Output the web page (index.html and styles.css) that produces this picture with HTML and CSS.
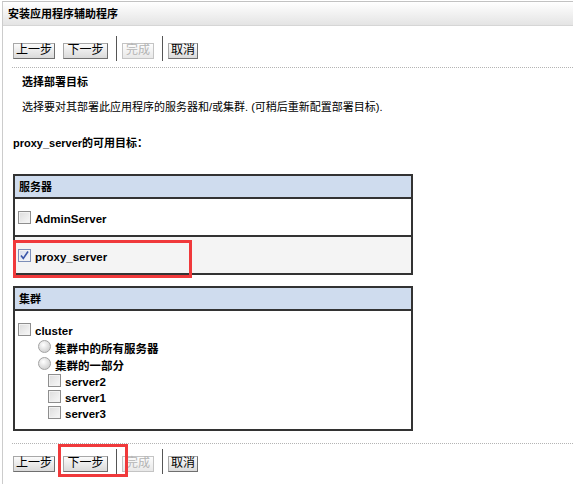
FILE: index.html
```html
<!DOCTYPE html>
<html lang="zh">

<head>
    <meta charset="UTF-8">
    <title>安装应用程序辅助程序</title>
    <link rel="stylesheet" href="styles.css">
</head>

<body>
    <div class="wizard">
        <div class="titlebar">安装应用程序辅助程序</div>

        <div class="toolbar top">
            <button class="btn">上一步</button>
            <button class="btn">下一步</button>
            <span class="sep"></span>
            <button class="btn" disabled>完成</button>
            <span class="sep"></span>
            <button class="btn">取消</button>
        </div>

        <h2 class="step-title">选择部署目标</h2>
        <p class="step-desc">选择要对其部署此应用程序的服务器和/或集群. (可稍后重新配置部署目标).</p>

        <h3 class="targets-title">proxy_server的可用目标：</h3>

        <div class="target-box">
            <div class="box-head">服务器</div>
            <div class="box-row">
                <span class="check"></span>
                <span class="label">AdminServer</span>
            </div>
            <div class="box-row alt">
                <span class="check checked">
                    <svg width="11" height="11" viewBox="0 0 11 11">
                        <path d="M2 5.5 L4.3 8.5 L9 1.5" fill="none" stroke="#3a55a8" stroke-width="1.6" />
                    </svg>
                </span>
                <span class="label">proxy_server</span>
            </div>
            <div class="mark mark-row"></div>
        </div>

        <div class="target-box">
            <div class="box-head">集群</div>
            <div class="box-body">
                <div class="tree-row">
                    <span class="check"></span>
                    <span class="label">cluster</span>
                </div>
                <div class="tree-row level1">
                    <span class="radio"></span>
                    <span class="label">集群中的所有服务器</span>
                </div>
                <div class="tree-row level1">
                    <span class="radio"></span>
                    <span class="label">集群的一部分</span>
                </div>
                <div class="tree-row level2 short">
                    <span class="check"></span>
                    <span class="label">server2</span>
                </div>
                <div class="tree-row level2 short">
                    <span class="check"></span>
                    <span class="label">server1</span>
                </div>
                <div class="tree-row level2 short">
                    <span class="check"></span>
                    <span class="label">server3</span>
                </div>
            </div>
        </div>

        <div class="toolbar bottom">
            <button class="btn">上一步</button>
            <button class="btn">下一步</button>
            <span class="sep"></span>
            <button class="btn" disabled>完成</button>
            <span class="sep"></span>
            <button class="btn">取消</button>
            <div class="mark mark-btn"></div>
        </div>
    </div>
</body>

</html>
```

FILE: styles.css
```css
body {
    margin: 0;
    font-family: "Liberation Sans", "Noto Sans CJK SC", sans-serif;
    font-size: 11px;
    color: #000;
    background-color: #fff;
}

.wizard {
    margin: 1px 0 0 2px;
    border-top: 1px solid #c2c2c2;
    border-left: 1px solid #cccccc;
    min-height: 482px;
}

.titlebar {
    height: 22px;
    line-height: 22px;
    padding: 1px 0 0 5px;
    font-weight: bold;
    background: linear-gradient(#ffffff, #e4e4e4);
    border-bottom: 1px solid #d6d6d6;
}

.toolbar {
    display: flex;
    align-items: center;
    margin-left: 9px;
    padding-left: 1px;
}

.toolbar.top {
    padding-top: 10px;
    padding-bottom: 6px;
    border-bottom: 1px dotted #b4b4b4;
}

.toolbar.bottom {
    position: relative;
    margin-top: 12px;
    padding-top: 5px;
    border-top: 1px dotted #b4b4b4;
}

.btn {
    height: 16px;
    padding: 0 2px;
    margin: 4px 8px 0 0;
    font-family: inherit;
    font-size: 12px;
    line-height: 13px;
    color: #000;
    background: linear-gradient(#fbfbfb, #dadada);
    border: 1px solid #a8a8a8;
    border-right-color: #6f6f6f;
    border-bottom-color: #6f6f6f;
    border-radius: 0;
}

.btn[disabled] {
    padding: 0 3px;
    color: #b4b4b4;
    background: linear-gradient(#fdfdfd, #e8e8e8);
    border-color: #c4c4c4;
}

.btn + .btn {
    padding: 0 3.5px;
}

.sep {
    width: 1px;
    height: 25px;
    margin: 0 5px 0 0;
    background-color: #555;
}

.step-title {
    margin: 5px 0 0 19px;
    padding-top: 1px;
    font-size: 11px;
    line-height: 16px;
}

.step-desc {
    margin: 8px 0 0 19px;
    padding-top: 1px;
    line-height: 16px;
}

.targets-title {
    margin: 19px 0 0 10px;
    padding-top: 1px;
    font-size: 11px;
    line-height: 16px;
}

.target-box {
    position: relative;
    width: 400px;
    box-sizing: border-box;
    margin: 23px 0 0 10px;
    border: 2px solid #333;
}

.target-box + .target-box {
    margin-top: 11px;
}

.box-head {
    height: 19px;
    line-height: 19px;
    padding: 2px 0 0 4px;
    font-weight: bold;
    background-color: #cfdcee;
    border-bottom: 2px solid #333;
}

.box-row {
    display: flex;
    align-items: center;
    height: 36px;
    padding-left: 3px;
}

.box-row.alt {
    border-top: 2px solid #333;
    background-color: #f4f4f4;
}

.label {
    margin-left: 4px;
    padding-top: 3px;
    font-size: 11.5px;
    font-weight: bold;
}

.check {
    display: inline-flex;
    align-items: center;
    justify-content: center;
    width: 13px;
    height: 13px;
    box-sizing: border-box;
    border: 1px solid #8e8e8e;
    background: linear-gradient(135deg, #dcdcdc, #f8f8f8);
    box-shadow: inset 0 0 0 1px #f2f2f2;
}

.check.checked {
    border-color: #7d8fb8;
    background: linear-gradient(135deg, #d6dcec, #f6f7fb);
}

.radio {
    display: inline-block;
    width: 13px;
    height: 13px;
    box-sizing: border-box;
    border-radius: 50%;
    border: 1px solid #a2a2a2;
    background: radial-gradient(circle at 40% 35%, #ffffff, #d4d4d4 70%);
}

.box-body {
    height: 118px;
    box-sizing: border-box;
    padding: 10px 0 0 3px;
}

.tree-row {
    display: flex;
    align-items: center;
    height: 17px;
}

.tree-row.short {
    height: 16px;
}

.tree-row.level1 {
    padding-left: 20px;
}

.tree-row.level2 {
    padding-left: 30px;
}

.mark {
    position: absolute;
    box-sizing: border-box;
    border: 3px solid #f0393b;
}

.mark-row {
    left: -2px;
    top: 64px;
    width: 179px;
    height: 38px;
}

.mark-btn {
    left: 46px;
    top: 0;
    width: 70px;
    height: 33px;
}
```
